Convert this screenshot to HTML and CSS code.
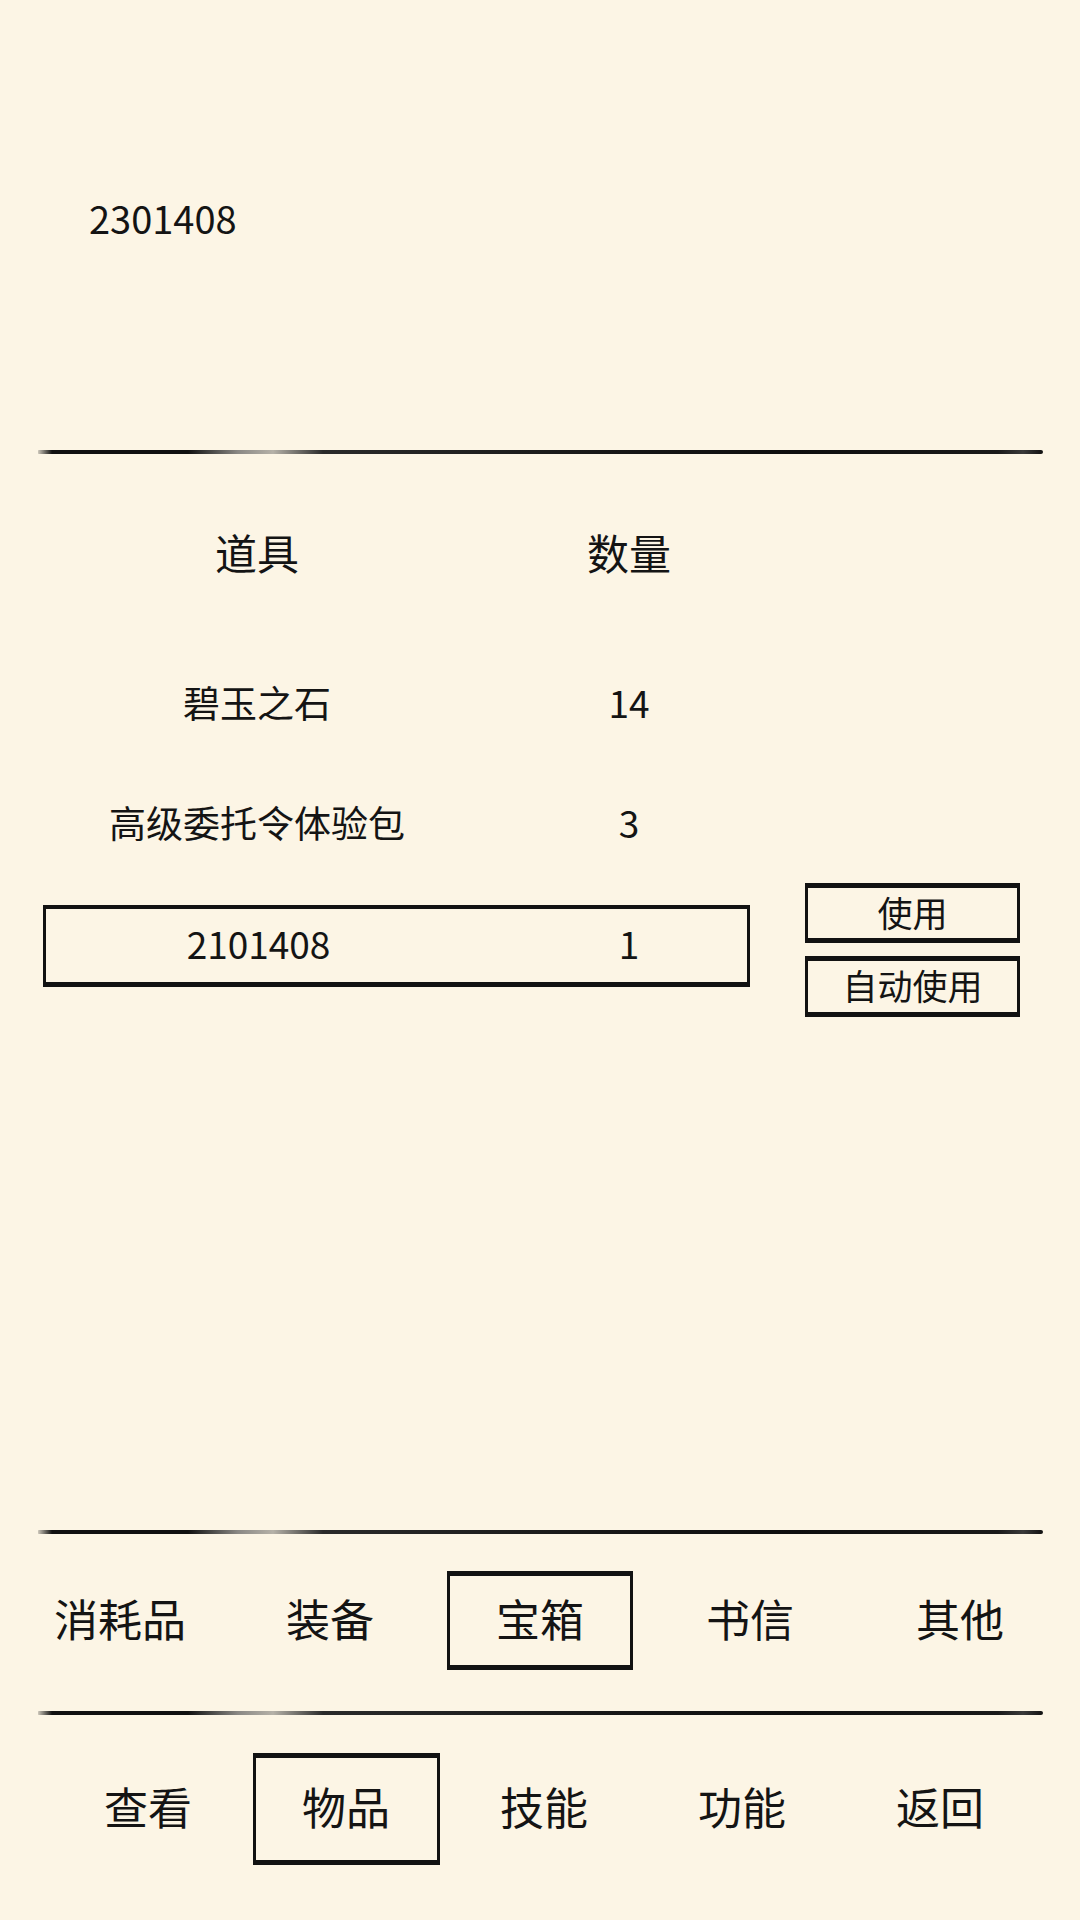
FILE: index.html
```html
<!DOCTYPE html>
<html lang="zh-CN">
<head>
<meta charset="utf-8">
<title>物品</title>
<link rel="stylesheet" href="styles.css">
</head>
<body>
<div class="screen">
  <div class="top">
    <span class="top-num">2301408</span>
  </div>
  <div class="rule"></div>

  <div class="table">
    <div class="row head">
      <div class="cell name">道具</div>
      <div class="cell qty">数量</div>
    </div>
    <div class="row item">
      <div class="cell name">碧玉之石</div>
      <div class="cell qty">14</div>
    </div>
    <div class="row item">
      <div class="cell name">高级委托令体验包</div>
      <div class="cell qty">3</div>
    </div>
    <div class="selected-line">
      <div class="row item boxed">
        <div class="cell name">2101408</div>
        <div class="cell qty">1</div>
      </div>
      <div class="actions">
        <div class="btn">使用</div>
        <div class="btn">自动使用</div>
      </div>
    </div>
  </div>

  <div class="rule"></div>
  <div class="tabs tabs-cat">
    <div class="tab">消耗品</div>
    <div class="tab">装备</div>
    <div class="tab active">宝箱</div>
    <div class="tab">书信</div>
    <div class="tab">其他</div>
  </div>
  <div class="rule"></div>
  <div class="tabs tabs-main">
    <div class="tab">查看</div>
    <div class="tab active">物品</div>
    <div class="tab">技能</div>
    <div class="tab">功能</div>
    <div class="tab">返回</div>
  </div>
</div>
</body>
</html>
```

FILE: styles.css
```css
html, body {
  margin: 0;
  padding: 0;
}

body {
  background: #fcf5e5;
  color: #141414;
  font-family: "Noto Sans CJK SC", "Noto Sans", sans-serif;
}

.screen {
  width: 1080px;
  height: 1920px;
  display: flex;
  flex-direction: column;
  overflow: hidden;
}

/* top number */
.top {
  height: 450px;
  box-sizing: border-box;
  padding-top: 188px;
  padding-left: 89px;
}

.top-num {
  display: block;
  font-size: 38px;
  line-height: 60px;
}

/* brush-like horizontal rule */
.rule {
  height: 4px;
  width: 1005px;
  margin-left: 38px;
  border-radius: 1px 3px 3px 1px;
  background: linear-gradient(to right,
    rgba(20,20,20,0.2) 0,
    #101010 14px,
    #101010 150px,
    #8a8884 200px,
    #b5b1a8 235px,
    #2a2a2a 285px,
    #151515 600px,
    #0e0e0e 760px,
    #1a1a1a 960px,
    #3a3a3a 985px,
    #111 1005px);
  flex: none;
}

/* table */
.table {
  height: 1076px;
  box-sizing: border-box;
  padding-top: 70px;
  padding-left: 43px;
}

.row {
  display: flex;
  align-items: center;
}

.cell {
  text-align: center;
  white-space: nowrap;
  padding-bottom: 5px;
}

.cell.name {
  width: 428px;
  flex: none;
}

.cell.qty {
  width: 316px;
  flex: none;
}

.row.head {
  height: 60px;
  font-size: 42px;
  margin-bottom: 58px;
}

.row.item {
  height: 120px;
  font-size: 37px;
}

.row.item .cell {
  padding-bottom: 0;
}

.selected-line {
  display: flex;
  align-items: flex-start;
}

.row.item.boxed {
  box-sizing: border-box;
  width: 707px;
  height: 82px;
  margin-top: 23px;
  border: 3px solid #121212;
  border-top-width: 4px;
  border-bottom-width: 5px;
}

.row.item.boxed .cell {
  padding-bottom: 5px;
}

.row.item.boxed .cell.name {
  width: 425px;
}

.actions {
  display: flex;
  flex-direction: column;
  gap: 13px;
  margin-left: 55px;
  margin-top: 1px;
}

.btn {
  box-sizing: border-box;
  width: 215px;
  height: 60px;
  border: 3px solid #121212;
  border-top-width: 5px;
  border-bottom-width: 5px;
  font-size: 35px;
  padding-bottom: 4px;
  display: flex;
  align-items: center;
  justify-content: center;
}

.btn + .btn {
  height: 61px;
}

/* tabs */
.tabs {
  display: grid;
  flex: none;
  font-size: 44px;
}

.tab {
  box-sizing: border-box;
  display: flex;
  align-items: center;
  justify-content: center;
  justify-self: center;
  padding-bottom: 6px;
  border: 3px solid transparent;
  border-top-width: 5px;
  border-bottom-width: 5px;
}

.tab.active {
  border-color: #121212;
}

.tabs-cat {
  height: 177px;
  box-sizing: border-box;
  padding-top: 37px;
  padding-left: 15px;
  grid-template-columns: repeat(5, 210px);
  align-items: start;
}

.tabs-cat .tab {
  width: 186px;
  height: 99px;
}

.tabs-main {
  padding-top: 38px;
  padding-left: 49px;
  grid-template-columns: repeat(5, 198px);
  align-items: start;
}

.tabs-main .tab {
  width: 187px;
  height: 112px;
}
```
